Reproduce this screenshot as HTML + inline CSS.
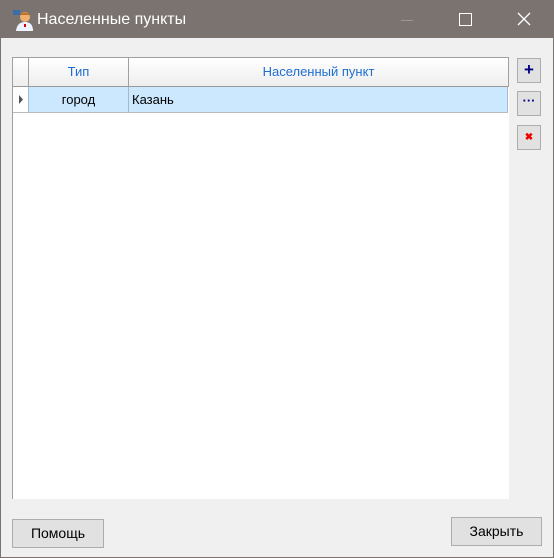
<!DOCTYPE html><html><head><style>
body{margin:0;width:554px;height:558px;overflow:hidden;font-family:"Liberation Sans",sans-serif;font-size:13px}
.win{position:absolute;left:0;top:0;width:552px;height:556px;border:1px solid #7a7370;background:#f0f0f0}
.title{position:absolute;left:0;top:0;width:552px;height:37px;background:#7a7370;color:#fff;font-size:16px}
.grid{position:absolute;left:11px;top:56px;width:496px;height:441px;background:#fff;border-left:1px solid #a0a0a0;border-top:1px solid #a0a0a0}
.hdr{position:absolute;top:0;height:28px;background:linear-gradient(#fff,#eee);border-right:1px solid #a0a0a0;border-bottom:1px solid #999;color:#1e6fd0;text-align:center;line-height:28px}
.row{position:absolute;top:29px;height:25px;background:#cce8ff;border-right:1px solid #a8b8c8;border-bottom:1px solid #bbb;line-height:25px}
.b{position:absolute;background:#e1e1e1;border:1px solid #adadad;box-sizing:border-box;text-align:center}
</style></head><body><div class="win">
<div class="title">
<svg style="position:absolute;left:11px;top:8px" width="22" height="22" viewBox="0 0 22 22"><rect x="1" y="1" width="7" height="5" fill="#3a6ea8"/><circle cx="13" cy="8" r="5" fill="#f0b070"/><path d="M8 6 Q13 1 18 6" fill="#c07020"/><path d="M4 22 Q5 13 13 13 Q21 13 21 22Z" fill="#eef4ff"/><rect x="12" y="15" width="2" height="3" fill="#d00"/></svg>
<span style="position:absolute;left:36px;top:10px">Населенные пункты</span>
<div style="position:absolute;left:400px;top:19px;width:12px;height:1px;background:#999"></div>
<div style="position:absolute;left:458px;top:12px;width:11px;height:11px;border:1px solid #fff"></div>
<svg style="position:absolute;left:516px;top:11px" width="14" height="14"><path d="M1 1L13 13M13 1L1 13" stroke="#fff" stroke-width="1.3"/></svg>
</div>
<div class="grid">
<div class="hdr" style="left:0;width:15px"></div>
<div class="hdr" style="left:16px;width:99px">Тип</div>
<div class="hdr" style="left:116px;width:379px">Населенный пункт</div>
<div class="row" style="left:0;width:15px;background:#fff"><svg width="15" height="25"><path d="M6 8L10 12.5L6 17Z" fill="#555"/></svg></div>
<div class="row" style="left:16px;width:99px;text-align:center">город</div>
<div class="row" style="left:116px;width:379px;padding-left:3px;box-sizing:border-box;height:26px">Казань</div>
</div>
<div class="b" style="left:516px;top:57px;width:24px;height:25px;color:#000080;font-weight:bold;font-size:17px;line-height:22px">+</div>
<div class="b" style="left:516px;top:90px;width:24px;height:25px;color:#000080;font-weight:bold;line-height:18px">···</div>
<div class="b" style="left:516px;top:124px;width:24px;height:25px;color:#e00;font-weight:bold;font-size:10px;line-height:23px">✖</div>
<div class="b" style="left:11px;top:518px;width:92px;height:29px;line-height:27px;font-size:14px">Помощь</div>
<div class="b" style="left:450px;top:516px;width:91px;height:29px;line-height:27px;font-size:14px">Закрыть</div>
</div></body></html>
